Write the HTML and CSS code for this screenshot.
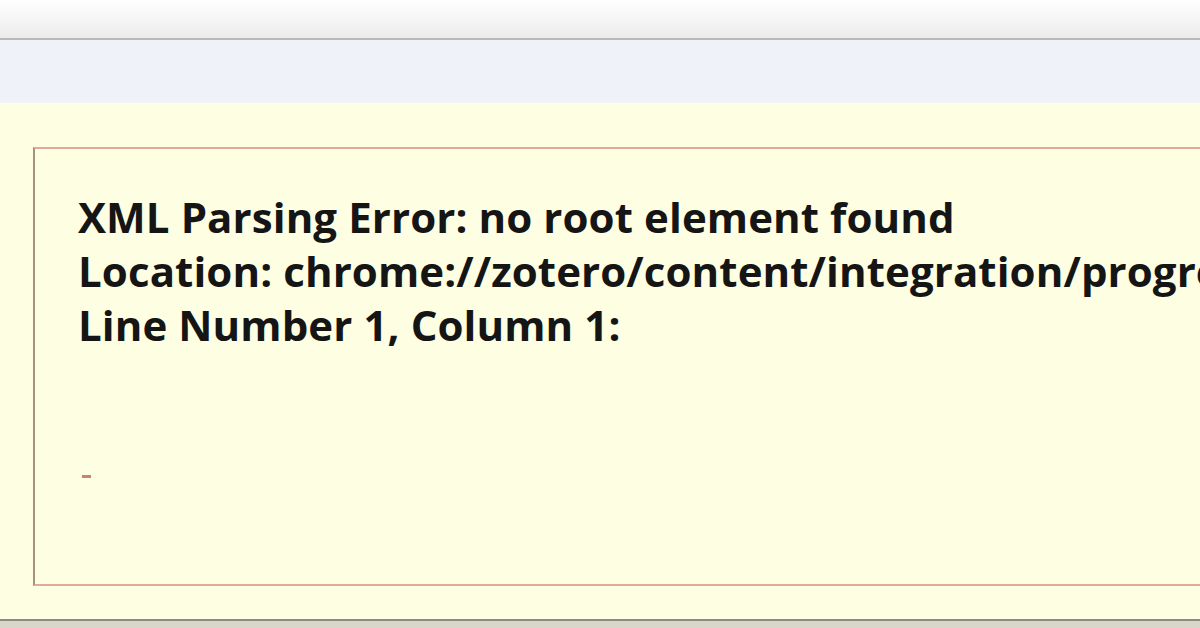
FILE: index.html
```html
<!DOCTYPE html>
<html lang="en">
<head>
  <meta charset="UTF-8" />
  <title>XML Parsing Error</title>
  <link rel="stylesheet" href="styles.css">
</head>
<body>

  <!-- Barra superior -->
  <div class="toolbar"></div>

  <!-- Franja azul -->
  <div class="tabbar"></div>

  <!-- Contenido del error -->
  <div class="content">
    <div class="error-box">
      <div class="error-text">
        <div>XML Parsing Error: no root element found</div>
        <div>Location: chrome://zotero/content/integration/progressBar.xul</div>
        <div>Line Number 1, Column 1:</div>
      </div>
      <div class="source-text"><span class="caret"></span></div>
    </div>
  </div>

  <!-- Barra inferior -->
  <div class="statusbar"></div>

</body>
</html>
```

FILE: styles.css
```css
* {
  box-sizing: border-box;
}

body {
  margin: 0;
  width: 1200px;
  height: 628px;
  overflow: hidden;
  background-color: #fefee2;
  font-family: 'Open Sans', 'Noto Sans', sans-serif;
}

.toolbar {
  height: 40px;
  background: linear-gradient(#ffffff, #ececec);
  border-bottom: 2px solid #b9b9b9;
}

.tabbar {
  height: 63px;
  background-color: #eff3f9;
}

.content {
  height: 516px;
  padding: 44px 0 0 33px;
  background-color: #fefee2;
  overflow: hidden;
}

.error-box {
  width: 1200px;
  height: 439px;
  border: 2px solid #e2a898;
  border-left-color: #a89080;
  padding: 41px 0 0 43px;
  white-space: nowrap;
  overflow: hidden;
}

.error-text {
  font-size: 42px;
  font-weight: 700;
  line-height: 54px;
  letter-spacing: 0.1px;
  color: #151515;
  font-variant-ligatures: none;
}

.source-text {
  margin-top: 109px;
  padding-left: 4px;
}

.caret {
  display: inline-block;
  width: 9px;
  height: 3px;
  background-color: #c98274;
}

.statusbar {
  height: 9px;
  border-top: 2px solid #8c8c80;
  background-color: #d9d7c9;
}
```
